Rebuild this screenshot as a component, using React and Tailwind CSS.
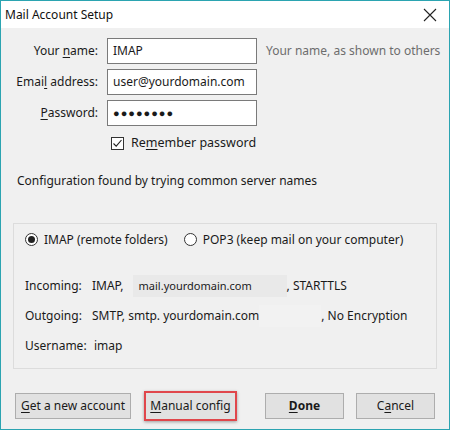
import React from "react";

const F = { fontFamily: '"Noto Sans", "Open Sans", sans-serif' };

function U({ children }) {
  return <span className="underline underline-offset-[2px] decoration-[1px]">{children}</span>;
}

function Btn({ children, bold, cls = "" }) {
  return (
    <div
      className={`h-[26px] flex items-center justify-center bg-[#e1e1e1] text-[12px] text-[#1a1a1a] whitespace-nowrap ${bold ? "font-bold" : ""} ${cls}`}
    >
      {children}
    </div>
  );
}

export default function App() {
  return (
    <div
      className="w-[450px] h-[430px] border border-[#2ba4b1] flex flex-col overflow-hidden bg-[#f0f0f0]"
      style={F}
    >
      {/* title bar */}
      <div className="h-[27px] bg-white flex items-center justify-between pl-[4px] pr-[10px] shrink-0">
        <span className="text-[12px] text-[#111]">Mail Account Setup</span>
        <svg width="14" height="14" viewBox="0 0 14 14" className="mr-[2px]">
          <path d="M1 1 L13 13 M13 1 L1 13" stroke="#222" strokeWidth="1.1" />
        </svg>
      </div>

      {/* body */}
      <div className="flex-1 flex flex-col pt-[10px] px-[12px] text-[12px] text-[#1a1a1a] whitespace-nowrap">
        <div className="grid grid-cols-[85px_150px_auto] gap-x-[9px] gap-y-[5px] items-center">
          <div className="text-right">Your <U>n</U>ame:</div>
          <div className="h-[26px] bg-white border border-[#7a7a7a] flex items-center px-[5px]">IMAP</div>
          <div className="text-[#6d6d6d]">Your name, as shown to others</div>

          <div className="text-right">Emai<U>l</U> address:</div>
          <div className="h-[26px] bg-white border border-[#7a7a7a] flex items-center px-[5px] overflow-hidden">user@yourdomain.com</div>
          <div />

          <div className="text-right"><U>P</U>assword:</div>
          <div className="h-[26px] bg-white border border-[#7a7a7a] flex items-center px-[5px] tracking-[1px] text-[11px]">●●●●●●●●</div>
          <div />

          <div />
          <div className="flex items-center gap-[7px] pl-[4px] pt-[3px]">
            <div className="w-[13px] h-[13px] border border-[#333] bg-white flex items-center justify-center shrink-0">
              <svg width="11" height="11" viewBox="0 0 11 11">
                <path d="M1.5 5.5 L4.2 8.2 L9.5 2" stroke="#222" strokeWidth="1.1" fill="none" />
              </svg>
            </div>
            <span className="text-[12.5px]">Re<U>m</U>ember password</span>
          </div>
          <div />
        </div>

        <div className="mt-[19px] pl-[4px]">Configuration found by trying common server names</div>

        <div className="mt-[33px] border border-[#dcdcdc] h-[146px] flex flex-col px-[11px] pt-[7px]">
          <div className="flex items-center gap-[16px]">
            <div className="flex items-center gap-[6px]">
              <div className="w-[13px] h-[13px] rounded-full border border-[#333] bg-white flex items-center justify-center">
                <div className="w-[7px] h-[7px] rounded-full bg-[#222]" />
              </div>
              <span>IMAP (remote folders)</span>
            </div>
            <div className="flex items-center gap-[6px]">
              <div className="w-[13px] h-[13px] rounded-full border border-[#333] bg-white" />
              <span>POP3 (keep mail on your computer)</span>
            </div>
          </div>

          <div className="mt-[26px] grid grid-cols-[56px_auto] gap-x-[11px] gap-y-[8px] items-center">
            <div className="text-right">Incoming:</div>
            <div className="flex items-center">
              <span>IMAP,</span>
              <span className="ml-[9px] w-[154px] h-[22px] bg-[#e9e9e9] flex items-center pl-[6px] text-[11px]">mail.yourdomain.com</span>
              <span>, STARTTLS</span>
            </div>
            <div className="text-right">Outgoing:</div>
            <div className="flex items-center h-[22px]">
              <span>SMTP, smtp. yourdomain.com</span>
              <span className="w-[62px] h-[22px] bg-[#f2f2f2]" />
              <span>, No Encryption</span>
            </div>
            <div className="text-right">Username:</div>
            <div className="h-[22px] flex items-center pl-[2px]">imap</div>
          </div>
        </div>

        <div className="mt-[22px] flex items-center">
          <Btn cls="w-[116px] ml-[2px] border border-[#adadad]"><U>G</U>et a new account</Btn>
          <div className="ml-[13px] border-2 border-[#e0464b] shadow-[0_1px_3px_rgba(0,0,0,0.35)]">
            <Btn cls="w-[89px] h-[25px]"><U>M</U>anual config</Btn>
          </div>
          <Btn bold cls="w-[79px] ml-[28px] border border-[#adadad]"><U>D</U>one</Btn>
          <Btn cls="w-[79px] ml-[12px] border border-[#adadad]">C<U>a</U>ncel</Btn>
        </div>
      </div>
    </div>
  );
}
